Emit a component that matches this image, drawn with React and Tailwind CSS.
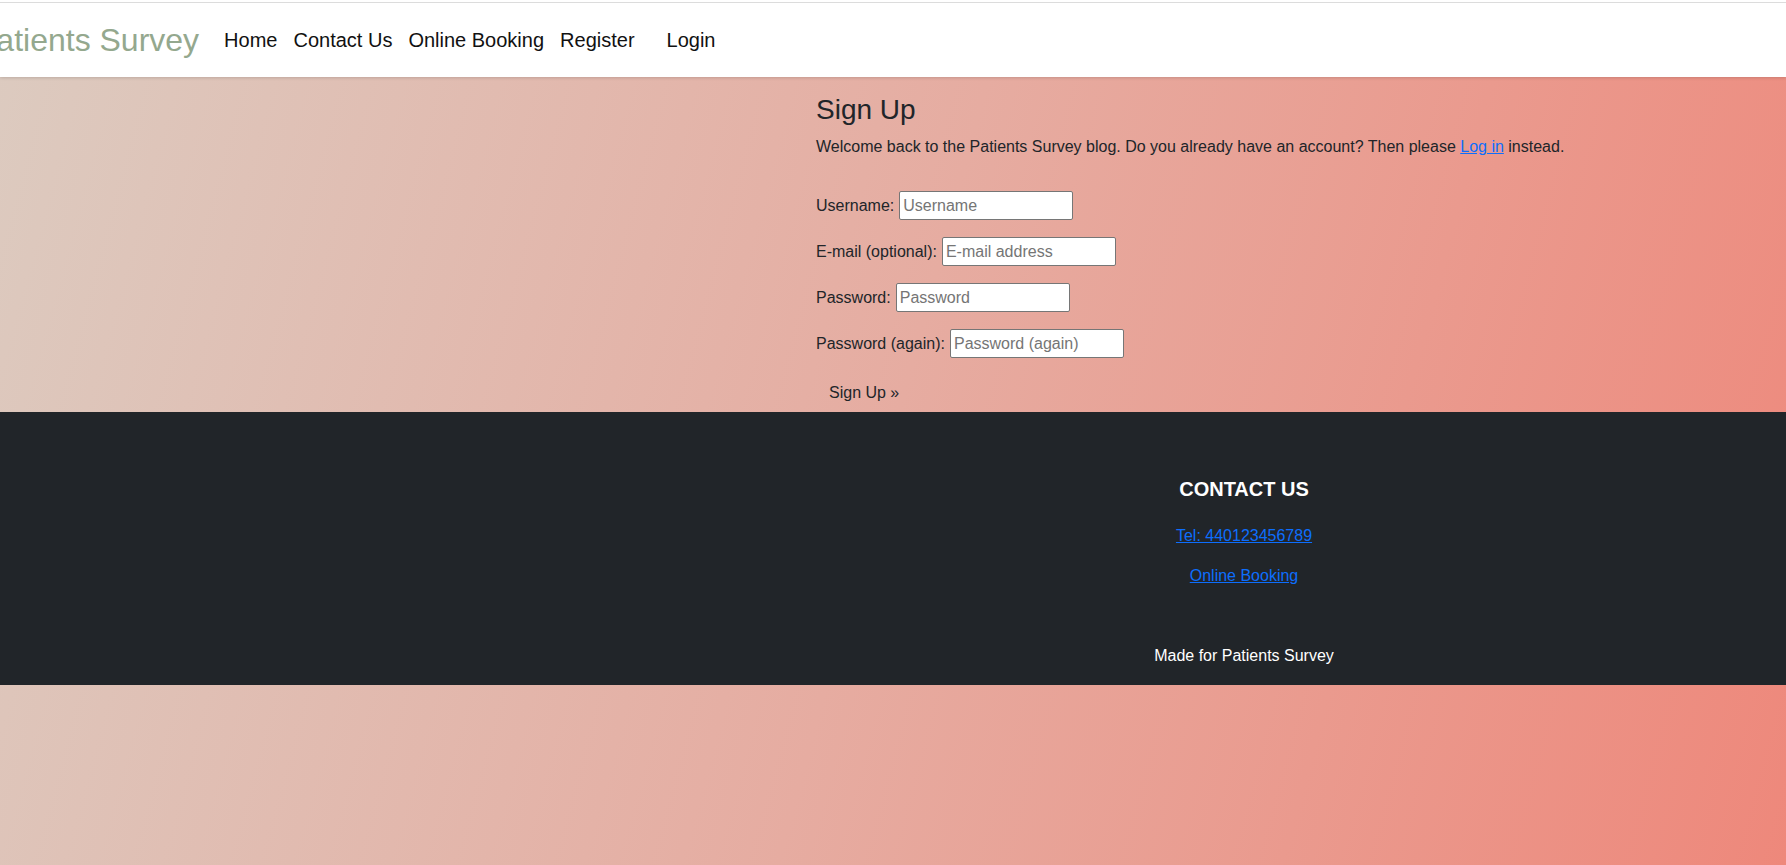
import React from "react";

const FONT = { fontFamily: '"Liberation Sans", Arial, Helvetica, sans-serif' };

function Header() {
  return (
    <header className="bg-white pt-[2px] shadow-[0_1px_3px_rgba(0,0,0,0.15)] relative z-10">
      <div className="border-t border-[#dcdcdc] h-[75px] flex items-center overflow-hidden">
        <a href="#" className="-ml-[25px] mr-[25px] text-[32px] leading-[1.2] text-[#94a88e] whitespace-nowrap">
          Patients Survey
        </a>
        <nav className="flex items-center gap-[16px] text-[20px] text-[#111]">
          <a href="#">Home</a>
          <a href="#">Contact Us</a>
          <a href="#">Online Booking</a>
          <a href="#">Register</a>
          <a href="#" className="ml-[16px]">Login</a>
        </nav>
      </div>
    </header>
  );
}

function Field({ label, placeholder, type = "text" }) {
  return (
    <div className="h-[30px] mb-4 flex items-center">
      <label className="mr-[5px]">{label}</label>
      <input
        type={type}
        placeholder={placeholder}
        className="w-[174px] h-[29px] bg-white border border-[#767676] rounded-[2px] px-[3px] text-[16px] placeholder:text-[#757575] outline-none"
      />
    </div>
  );
}

function SignUp() {
  return (
    <main className="pl-[816px] pt-[16px] text-[#212529]">
      <h3 className="text-[28px] leading-[1.2] mb-2">Sign Up</h3>
      <p className="text-[16px] leading-6 mb-[32px]">
        Welcome back to the Patients Survey blog. Do you already have an account? Then please{" "}
        <a href="#" className="text-[#0d6efd] underline">Log in</a> instead.
      </p>
      <form>
        <Field label="Username:" placeholder="Username" />
        <Field label="E-mail (optional):" placeholder="E-mail address" type="email" />
        <Field label="Password:" placeholder="Password" type="password" />
        <Field label="Password (again):" placeholder="Password (again)" type="password" />
        <button type="submit" className="h-[37px] px-3 border border-transparent text-[16px] leading-6 text-[#212529]">
          Sign Up »
        </button>
      </form>
    </main>
  );
}

function Footer() {
  return (
    <footer className="bg-[#212529] text-white pt-[65px] pb-[17px]">
      <div className="ml-[1044px] w-[400px] text-center">
        <h5 className="text-[20px] font-bold leading-6 mb-[23px]">CONTACT US</h5>
        <a href="#" className="block leading-6 mb-4 text-[#0d6efd] underline">Tel: 440123456789</a>
        <a href="#" className="block leading-6 mb-[56px] text-[#0d6efd] underline">Online Booking</a>
        <p className="leading-6">Made for Patients Survey</p>
      </div>
    </footer>
  );
}

export default function App() {
  return (
    <div style={FONT} className="min-h-screen text-[16px] bg-[linear-gradient(105deg,#dccbc0_0%,#e6aca1_50%,#ee887b_100%)]">
      <Header />
      <SignUp />
      <Footer />
    </div>
  );
}
